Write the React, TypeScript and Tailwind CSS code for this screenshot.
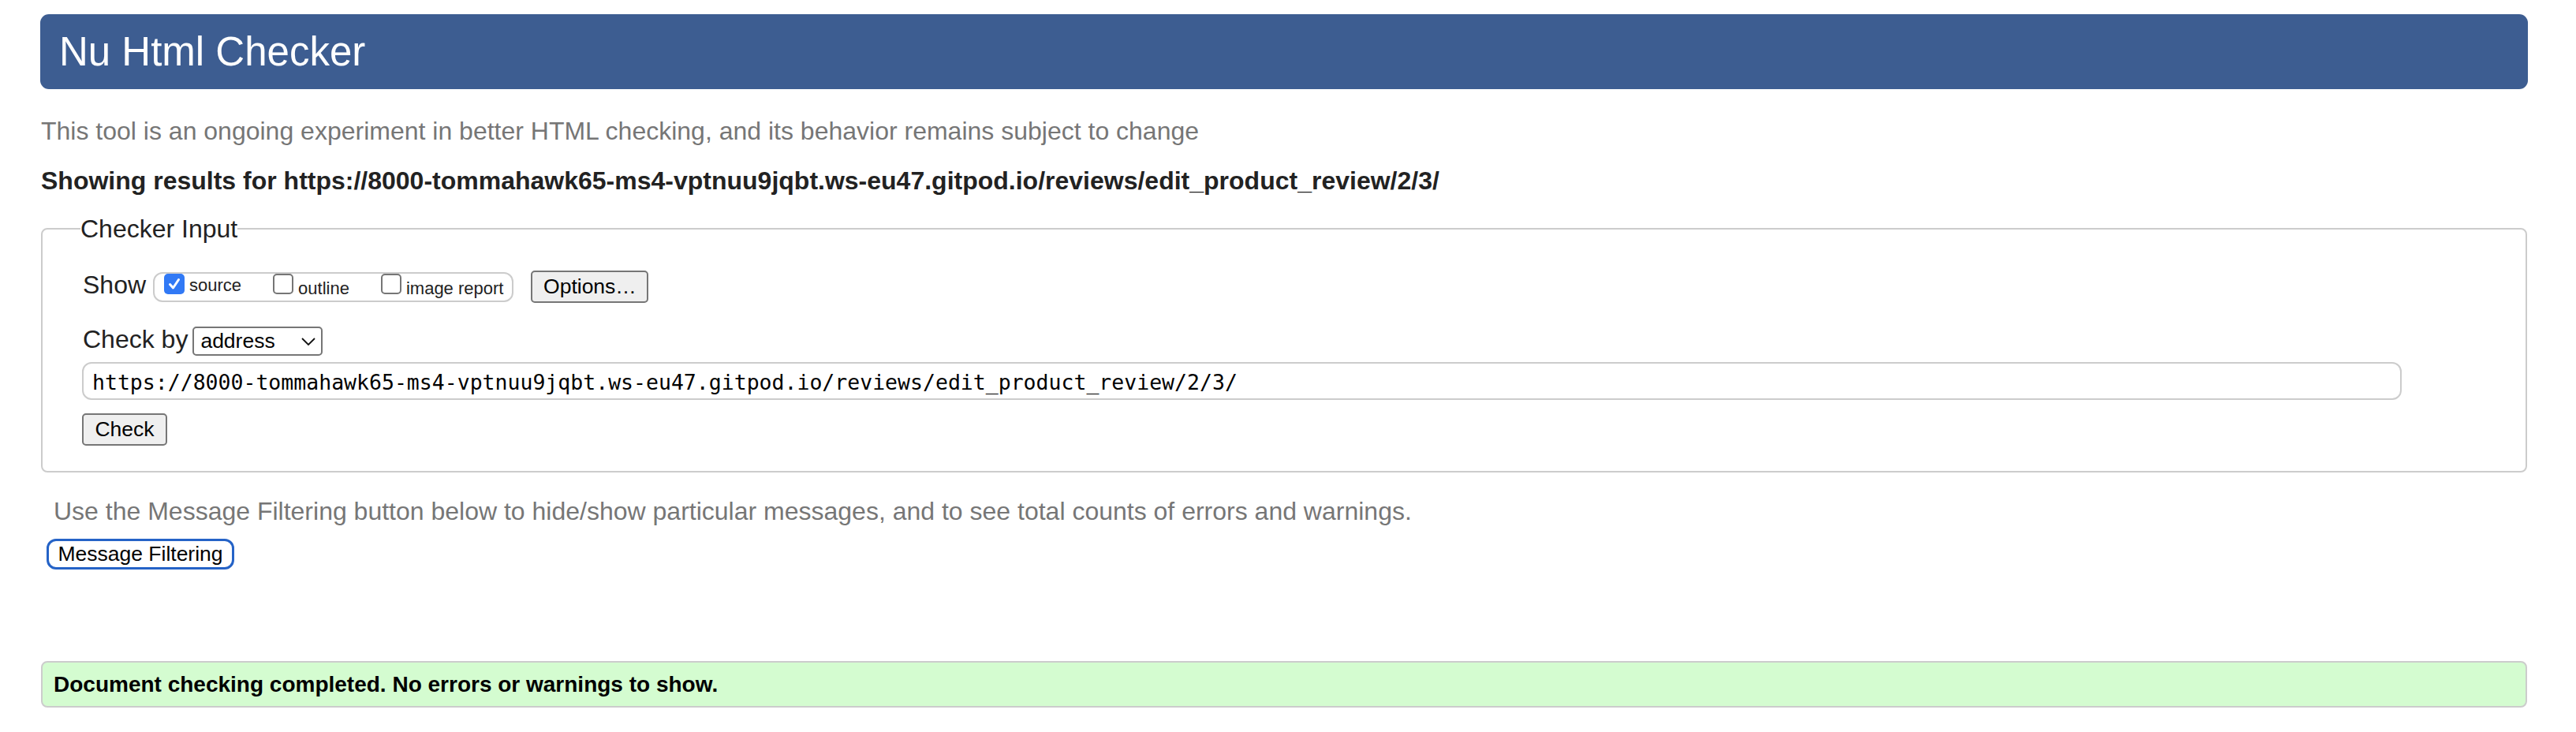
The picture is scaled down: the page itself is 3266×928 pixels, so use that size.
import React from 'react';

const url = 'https://8000-tommahawk65-ms4-vptnuu9jqbt.ws-eu47.gitpod.io/reviews/edit_product_review/2/3/';

function Checkbox({ checked }: { checked?: boolean }) {
  if (checked) {
    return (
      <span className="w-[26px] h-[26px] rounded-[5px] bg-[#3179f5] flex items-center justify-center shrink-0">
        <svg width="18" height="18" viewBox="0 0 18 18">
          <path d="M3.5 9.5 L7.5 14 L14.5 3.5" fill="none" stroke="white" strokeWidth="3" strokeLinecap="round" strokeLinejoin="round" />
        </svg>
      </span>
    );
  }
  return <span className="w-[26px] h-[26px] rounded-[5px] border-2 border-[#767676] bg-white shrink-0" />;
}

export default function App() {
  return (
    <div className="min-h-screen bg-white font-['Liberation_Sans',Arial,sans-serif] pl-[51px] pt-[18px]">
      <div className="w-[3154px]">
        {/* Header */}
        <header className="h-[95px] rounded-[11px] bg-[#3d5d91] flex items-center pl-[24px]">
          <h1 className="text-[51px] text-white leading-none font-normal">Nu Html Checker</h1>
        </header>

        <p className="mt-[35px] ml-[1px] text-[32px] leading-[36px] text-[#767676]">
          This tool is an ongoing experiment in better HTML checking, and its behavior remains subject to change
        </p>
        <p className="mt-[27px] ml-[1px] text-[32px] leading-[36px] font-bold text-[#222]">
          Showing results for {url}
        </p>

        {/* Checker Input */}
        <fieldset className="mt-[25px] ml-[1px] w-[3152px] border-2 border-[#ccc] rounded-[8px] px-[51px] pt-[35px] pb-[32px]">
          <legend className="ml-[-3px] text-[32px] leading-[36px] text-[#222]">Checker Input</legend>

          <div className="flex items-center">
            <span className="text-[32px] leading-[36px] pb-[5px] text-[#222]">Show</span>
            <div className="ml-[9px] h-[38px] border-2 border-[#ccc] rounded-[12px] pl-[12px] pr-[11px] flex items-start">
              <label className="flex items-baseline">
                <Checkbox checked />
                <span className="ml-[6px] text-[22px] leading-none text-[#222]">source</span>
              </label>
              <label className="flex items-baseline ml-[40px]">
                <Checkbox />
                <span className="ml-[6px] text-[22px] leading-none text-[#222]">outline</span>
              </label>
              <label className="flex items-baseline ml-[40px]">
                <Checkbox />
                <span className="ml-[6px] text-[22px] leading-none text-[#222]">image report</span>
              </label>
            </div>
            <button className="ml-[22px] h-[41px] w-[149px] bg-[#efefef] border-2 border-[#767676] rounded-[5px] text-[26.5px] text-black leading-none">
              Options…
            </button>
          </div>

          <div className="flex items-center mt-[28px]">
            <span className="text-[32px] leading-[36px] pb-[5px] text-[#222]">Check by</span>
            <div className="ml-[6px] w-[165px] h-[37px] border-2 border-[#767676] rounded-[5px] bg-white flex items-center justify-between pl-[8px] pr-[7px]">
              <span className="text-[26.5px] leading-none text-black">address</span>
              <svg width="18" height="10" viewBox="0 0 18 10">
                <path d="M1 1 L9 9 L17 1" fill="none" stroke="#111" strokeWidth="1.8" />
              </svg>
            </div>
          </div>

          <div className="mt-[6px] ml-[-1px] w-[2941px] h-[48px] border-2 border-[#ccc] rounded-[12px] flex items-center pl-[11px] pt-[4px] font-['DejaVu_Sans_Mono',monospace] text-[26.5px] text-black">
            {url}
          </div>

          <button className="block mt-[17px] ml-[-1px] w-[108px] h-[41px] bg-[#efefef] border-2 border-[#767676] rounded-[5px] text-[26.5px] text-black leading-none">
            Check
          </button>
        </fieldset>

        <p className="mt-[31px] ml-[17px] text-[32px] leading-[36px] text-[#767676]">
          Use the Message Filtering button below to hide/show particular messages, and to see total counts of errors and warnings.
        </p>
        <button className="block mt-[17px] ml-[8px] w-[238px] h-[39px] border-[3px] border-[#2563c7] rounded-[12px] bg-white text-[26.5px] text-black leading-none">
          Message Filtering
        </button>

        <div className="mt-[116px] ml-[1px] w-[3152px] h-[59px] border-2 border-[#ccc] rounded-[8px] bg-[#d4fcd0] flex items-center pl-[14px] font-bold text-[28px] text-black">
          Document checking completed. No errors or warnings to show.
        </div>

        <h2 className="mt-[24px] ml-[7px] text-[32px] leading-[36px] font-bold text-[#222]">Source</h2>
      </div>
    </div>
  );
}
